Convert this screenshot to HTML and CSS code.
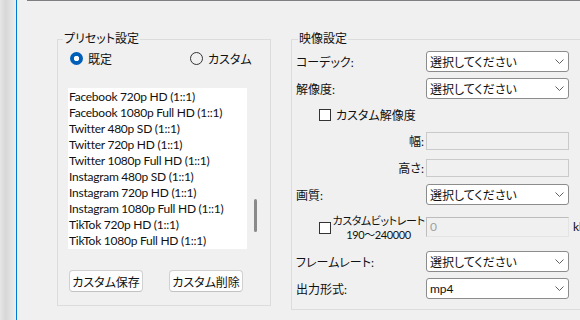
FILE: index.html
```html
<!DOCTYPE html>
<html lang="ja">
<head>
<meta charset="UTF-8">
<title>映像設定</title>
<link rel="stylesheet" href="styles.css">
</head>
<body>
<div class="frame">
  <div class="edge"></div>
  <div class="window">
    <div class="topline"></div>
    <div class="panes">

      <!-- プリセット -->
      <fieldset class="group preset">
        <legend>プリセット設定</legend>
        <div class="radios">
          <label class="radio first on"><span class="dot"></span>既定</label>
          <label class="radio"><span class="dot"></span>カスタム</label>
        </div>
        <div class="listbox">
          <ul class="items">
            <li>Facebook 720p HD (1::1)</li>
            <li>Facebook 1080p Full HD (1::1)</li>
            <li>Twitter 480p SD (1::1)</li>
            <li>Twitter 720p HD (1::1)</li>
            <li>Twitter 1080p Full HD (1::1)</li>
            <li>Instagram 480p SD (1::1)</li>
            <li>Instagram 720p HD (1::1)</li>
            <li>Instagram 1080p Full HD (1::1)</li>
            <li>TikTok 720p HD (1::1)</li>
            <li>TikTok 1080p Full HD (1::1)</li>
          </ul>
          <div class="scroll"><div class="thumb"></div></div>
        </div>
        <div class="buttons">
          <button>カスタム保存</button>
          <button>カスタム削除</button>
        </div>
      </fieldset>

      <!-- 映像設定 -->
      <fieldset class="group video">
        <legend>映像設定</legend>
        <div class="fields">
          <div class="row">
            <span class="label">コーデック:</span>
            <div class="select">選択してください<svg class="chev" width="9" height="5" viewBox="0 0 9 5"><polyline points="0.5,0.5 4.5,4.5 8.5,0.5"/></svg></div>
          </div>
          <div class="row">
            <span class="label">解像度:</span>
            <div class="select">選択してください<svg class="chev" width="9" height="5" viewBox="0 0 9 5"><polyline points="0.5,0.5 4.5,4.5 8.5,0.5"/></svg></div>
          </div>
          <div class="row check-row">
            <span class="box"></span><span class="check-text">カスタム解像度</span>
          </div>
          <div class="row">
            <span class="label right">幅:</span>
            <div class="textbox"></div>
          </div>
          <div class="row">
            <span class="label right">高さ:</span>
            <div class="textbox"></div>
          </div>
          <div class="row">
            <span class="label">画質:</span>
            <div class="select">選択してください<svg class="chev" width="9" height="5" viewBox="0 0 9 5"><polyline points="0.5,0.5 4.5,4.5 8.5,0.5"/></svg></div>
          </div>
          <div class="row bitrate">
            <span class="box"></span>
            <span class="bitrate-text">カスタムビットレート<br>190〜240000</span>
            <div class="textbox value">0</div>
            <span class="unit">kbps</span>
          </div>
          <div class="row">
            <span class="label">フレームレート:</span>
            <div class="select">選択してください<svg class="chev" width="9" height="5" viewBox="0 0 9 5"><polyline points="0.5,0.5 4.5,4.5 8.5,0.5"/></svg></div>
          </div>
          <div class="row">
            <span class="label">出力形式:</span>
            <div class="select">mp4<svg class="chev" width="9" height="5" viewBox="0 0 9 5"><polyline points="0.5,0.5 4.5,4.5 8.5,0.5"/></svg></div>
          </div>
        </div>
      </fieldset>

    </div>
  </div>
</div>
</body>
</html>
```

FILE: styles.css
```css
body {
  margin: 0;
  background-color: #f0f0f0;
  font-family: "Lato", "Noto Sans CJK JP", sans-serif;
  font-size: 12px;
  font-feature-settings: "palt";
  color: #111;
  overflow: hidden;
}
.frame {
  display: flex;
  height: 320px;
}
.edge {
  width: 16px;
  background: linear-gradient(to right, #e6e6e6, #d7d7d7 35%, #e8e8e8 85%, #eeeeee);
}
.window {
  flex: 1;
  min-width: 0;
  border-left: 1px solid #0078d4;
  overflow: hidden;
}
.topline {
  height: 1px;
  margin-left: 10px;
  background-color: #7d7f82;
}
.panes {
  display: flex;
  align-items: flex-start;
  gap: 20px;
  margin-top: 30px;
  padding-left: 40px;
}

/* グループボックス */
.group {
  margin: 0;
  border: 1px solid #dcdcdc;
  box-sizing: border-box;
  min-width: 0;
}
.group legend {
  line-height: 16px;
  padding: 0 1px;
}
.preset {
  flex: none;
  width: 214px;
  height: 275px;
  padding: 3px 10px 0 10px;
}
.preset legend {
  margin-left: -5px;
}
.video {
  flex: none;
  width: 330px;
  height: 279px;
  padding: 4px 4px 0 4px;
}
.video legend {
  margin-left: 2px;
}

/* ラジオ */
.radios {
  display: flex;
  align-items: center;
  height: 16px;
  padding-left: 2px;
}
.radio {
  display: flex;
  align-items: center;
  gap: 5px;
}
.radio.first {
  width: 120px;
}
.dot {
  width: 13px;
  height: 13px;
  box-sizing: border-box;
  border: 1px solid #333;
  border-radius: 50%;
}
.radio.on .dot {
  border: none;
  background: radial-gradient(circle, #fff 0 2.4px, #005fb8 3px);
}

/* リスト */
.listbox {
  display: flex;
  height: 161px;
  margin-top: 22px;
}
.items {
  width: 185px;
  margin: 0;
  padding: 1px 0 0 1px;
  box-sizing: border-box;
  list-style: none;
  background-color: #fff;
  line-height: 16px;
  letter-spacing: -0.25px;
  white-space: nowrap;
  overflow: hidden;
}
.scroll {
  width: 13px;
}
.thumb {
  width: 3px;
  height: 33px;
  margin-top: 111px;
  margin-left: 7px;
  border-radius: 2px;
  background-color: #8a8a8a;
}

.buttons {
  display: flex;
  gap: 26px;
  margin-top: 21px;
  padding-left: 1px;
}
.buttons button {
  width: 74px;
  height: 22px;
  padding: 0;
  font: inherit;
  color: #111;
  background-color: #fdfdfd;
  border: 1px solid #d0d0d0;
  border-bottom-color: #c2c2c2;
  border-radius: 4px;
}

/* 映像設定の行 */
.fields {
  display: flex;
  flex-direction: column;
  gap: 6px;
}
.row {
  display: flex;
  align-items: center;
  height: 21px;
  white-space: nowrap;
}
.label {
  flex: none;
  width: 130px;
}
.label.right {
  text-align: right;
  padding-right: 2px;
  box-sizing: border-box;
}
.select {
  flex: none;
  display: flex;
  align-items: center;
  justify-content: space-between;
  width: 143px;
  height: 21px;
  box-sizing: border-box;
  padding: 0 4px 0 3px;
  background-color: #fff;
  border: 1px solid #8c8c8c;
  border-radius: 3px;
}
.chev polyline {
  fill: none;
  stroke: #606060;
  stroke-width: 1;
}
.textbox {
  flex: none;
  width: 143px;
  height: 18px;
  box-sizing: border-box;
  border: 1px solid #cacaca;
  background-color: #f0f0f0;
}
.check-row {
  height: 19px;
  padding-left: 23px;
}
.box {
  flex: none;
  width: 12px;
  height: 12px;
  box-sizing: border-box;
  border: 1px solid #333;
  background-color: #fff;
}
.check-text {
  margin-left: 5px;
}
.bitrate {
  height: 34px;
  align-items: flex-start;
  padding-left: 23px;
}
.bitrate .box {
  margin-top: 11px;
}
.bitrate-text {
  flex: none;
  width: 95px;
  padding-top: 3px;
  font-size: 11px;
  letter-spacing: -0.4px;
  line-height: 14px;
  text-align: center;
}
.textbox.value {
  height: 20px;
  margin-top: 6px;
  padding-left: 3px;
  line-height: 18px;
  color: #a0a0a0;
  border-color: #bdbdbd #e4e4e4 #e4e4e4 #bdbdbd;
}
.unit {
  margin-top: 8px;
  margin-left: 4px;
  line-height: 16px;
}
```
